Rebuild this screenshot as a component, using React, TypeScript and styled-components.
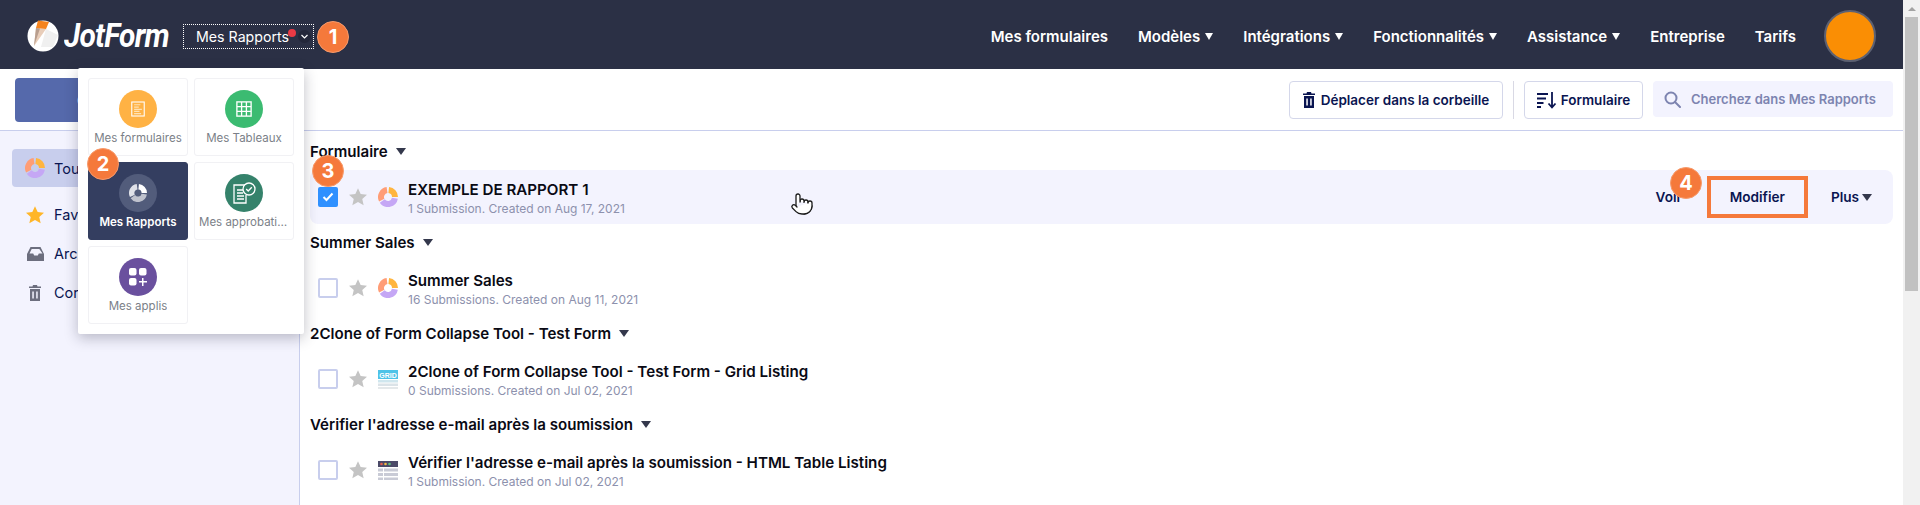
import React from "react";
import styled, { createGlobalStyle } from "styled-components";
import { Pointer } from "lucide-react";

const GlobalStyle = createGlobalStyle`
  html, body {
    margin: 0;
    padding: 0;
    background: #fff;
    overflow: hidden;
  }
  * {
    box-sizing: border-box;
  }
`;

const FONT = `"Inter", "Liberation Sans", sans-serif`;

const Shell = styled.div`
  display: flex;
  width: 1920px;
  height: 505px;
  overflow: hidden;
  position: relative;
  font-family: ${FONT};
  color: #0a1551;
`;
const Page = styled.div`
  flex: 1;
  min-width: 0;
  display: flex;
  flex-direction: column;
`;

const Header = styled.header`
  height: 69px;
  flex: none;
  background: #2b3045;
  display: flex;
  align-items: center;
  padding: 3px 27px 0;
`;
const Logo = styled.div`
  display: flex;
  align-items: center;
  gap: 5px;
  width: 156px;
`;
const LogoText = styled.span`
  font-family: "Roboto", sans-serif;
  font-size: 32.5px;
  font-weight: 700;
  font-style: italic;
  color: #fff;
  letter-spacing: -0.8px;
  transform: scaleX(0.92);
  transform-origin: left center;
`;
const Selector = styled.div`
  width: 131px;
  height: 25px;
  border: 1px dotted #fff;
  display: flex;
  align-items: center;
  padding-left: 12px;
  color: #fff;
  font-size: 14.2px;
  position: relative;
`;
const Dot = styled.span`
  position: absolute;
  left: 104px;
  top: 4px;
  width: 8px;
  height: 8px;
  border-radius: 50%;
  background: #ea3a45;
`;
const Chevron = styled.span`
  position: absolute;
  right: 2px;
  top: 5px;
  width: 13px;
  height: 13px;
  border-radius: 50%;
  background: #23273a;
  display: flex;
  align-items: center;
  justify-content: center;
`;
const Nav = styled.nav`
  margin-left: auto;
  display: flex;
  align-items: center;
  gap: 30px;
`;
const NavItem = styled.span`
  color: #fff;
  font-size: 15px;
  font-weight: 600;
  display: flex;
  align-items: center;
  gap: 5px;
  white-space: nowrap;
`;
const NavCaret = styled.span`
  width: 0;
  height: 0;
  border-left: 4px solid transparent;
  border-right: 4px solid transparent;
  border-top: 7px solid #fff;
`;
const Avatar = styled.div`
  width: 52px;
  height: 52px;
  border-radius: 50%;
  background: #fa8e04;
  border: 2px solid #5d6172;
  margin-left: -2px;
`;

const Toolbar = styled.div`
  height: 62px;
  flex: none;
  background: #fff;
  border-bottom: 1px solid #c8ceed;
  display: flex;
  align-items: flex-start;
  padding: 9px 10px 0 15px;
`;
const CreateButton = styled.div`
  width: 270px;
  height: 44px;
  border-radius: 4px;
  background: #5569ab;
  color: #fff;
  font-size: 14px;
  font-weight: 600;
  display: flex;
  align-items: center;
  padding-left: 62px;
`;
const ToolButton = styled.div`
  height: 38px;
  margin-top: 3px;
  border: 1px solid #d4d7ea;
  border-radius: 4px;
  background: #fff;
  display: flex;
  align-items: center;
  justify-content: center;
  gap: 6px;
  font-size: 13.5px;
  font-weight: 600;
  color: #0a1551;
  white-space: nowrap;
`;
const TrashButton = styled(ToolButton)`
  width: 214px;
  margin-left: auto;
`;
const SortButton = styled(ToolButton)`
  width: 119px;
  gap: 4px;
`;
const Divider = styled.div`
  width: 1px;
  height: 38px;
  margin: 3px 10px 0;
  background: #d9d9e4;
`;
const Search = styled.div`
  width: 240px;
  height: 36px;
  margin: 3px 0 0 10px;
  border-radius: 4px;
  background: #f3f3fe;
  display: flex;
  align-items: center;
  gap: 10px;
  padding-left: 11px;
  font-size: 13px;
  font-weight: 600;
  color: #7d84b0;
  white-space: nowrap;
`;

const Body = styled.div`
  flex: 1;
  min-height: 0;
  display: flex;
`;
const Sidebar = styled.aside`
  width: 300px;
  flex: none;
  background: #f3f3fe;
  border-right: 1px solid #c8ceed;
  padding: 18px 12px 0;
  display: flex;
  flex-direction: column;
`;
const SideItem = styled.div<{ $active?: boolean }>`
  height: 39px;
  border-radius: 4px;
  background: ${(p) => (p.$active ? "#c8ceed" : "transparent")};
  display: flex;
  align-items: center;
  gap: 9px;
  padding-left: 13px;
  font-size: 14.5px;
  color: #0a1551;
`;
const SideActive = styled(SideItem)`
  height: 38px;
  margin-bottom: 8px;
`;
const SideIcon = styled.span`
  width: 20px;
  flex: none;
  display: flex;
  justify-content: center;
`;

const Main = styled.main`
  flex: 1;
  min-width: 0;
  background: #fff;
  padding: 2px 10px 0;
`;
const GroupHeader = styled.div`
  height: 37px;
  display: flex;
  align-items: center;
  gap: 8px;
  font-size: 15.1px;
  font-weight: 600;
  color: #0a0a14;
  padding-bottom: 1px;
`;
const Caret = styled.span`
  width: 0;
  height: 0;
  border-left: 5px solid transparent;
  border-right: 5px solid transparent;
  border-top: 7px solid #34384c;
`;
const Row = styled.div<{ $selected?: boolean }>`
  height: 54px;
  border-radius: 8px;
  background: ${(p) => (p.$selected ? "#f3f3fe" : "transparent")};
  display: flex;
  align-items: center;
  padding: 0 21px 0 8px;
`;
const Check = styled.span<{ $checked?: boolean }>`
  width: 20px;
  height: 20px;
  border-radius: 2px;
  border: 2px solid ${(p) => (p.$checked ? "#2f90ff" : "#c8ceed")};
  background: ${(p) => (p.$checked ? "#2f90ff" : "#fff")};
  display: flex;
  align-items: center;
  justify-content: center;
  flex: none;
`;
const StarSlot = styled.span`
  margin: 0 10px 0 10px;
  display: flex;
`;
const RowText = styled.div`
  margin-left: 10px;
  padding-top: 2px;
  display: flex;
  flex-direction: column;
  gap: 2px;
`;
const RowTitle = styled.div`
  font-size: 15.15px;
  line-height: 18px;
  font-weight: 600;
  color: #0a0a14;
  white-space: nowrap;
`;
const RowSub = styled.div`
  font-size: 12px;
  line-height: 15px;
  color: #8d91ad;
  white-space: nowrap;
`;
const RowActions = styled.div`
  margin-left: auto;
  display: flex;
  align-items: center;
  font-size: 13.6px;
  font-weight: 600;
  color: #0a1551;
`;
const ActionLabel = styled.span`
  display: flex;
  align-items: center;
  gap: 3px;
`;
const EditBox = styled.span`
  width: 101px;
  height: 42px;
  margin: 0 23px 0 25px;
  border: 4px solid #f5793b;
  display: flex;
  align-items: center;
  justify-content: center;
`;

const Scrollbar = styled.div`
  width: 17px;
  flex: none;
  background: #f1f1f1;
  display: flex;
  flex-direction: column;
  align-items: center;
`;
const ScrollArrow = styled.span`
  height: 17px;
  flex: none;
  display: flex;
  align-items: center;
  &::before {
    content: "";
    width: 0;
    height: 0;
    border-left: 4px solid transparent;
    border-right: 4px solid transparent;
    border-bottom: 4px solid #a3a3a3;
  }
`;
const ScrollThumb = styled.span`
  width: 13px;
  height: 274px;
  background: #c1c1c1;
`;

// overlay menu opened from the selector
const Menu = styled.div`
  position: absolute;
  left: 78px;
  top: 68px;
  width: 226px;
  height: 266px;
  background: #fff;
  border-radius: 2px;
  box-shadow: 0 4px 14px rgba(30, 30, 50, 0.28);
  padding: 10px;
  display: grid;
  grid-template-columns: 100px 100px;
  grid-auto-rows: 78px;
  gap: 6px;
`;
const Tile = styled.div<{ $active?: boolean }>`
  border-radius: 3px;
  border: 1px solid ${(p) => (p.$active ? "#343e60" : "#f1f1f4")};
  background: ${(p) => (p.$active ? "#343e60" : "#fff")};
  color: ${(p) => (p.$active ? "#fff" : "#7b7f88")};
  font-size: 11.5px;
  font-weight: ${(p) => (p.$active ? 600 : 400)};
  display: flex;
  flex-direction: column;
  align-items: center;
  padding-top: 11px;
  gap: 3px;
  overflow: hidden;
`;
const TileCircle = styled.span<{ $bg: string }>`
  width: 38px;
  height: 38px;
  flex: none;
  border-radius: 50%;
  background: ${(p) => p.$bg};
  display: flex;
  align-items: center;
  justify-content: center;
`;
const TileLabel = styled.span`
  max-width: 90px;
  white-space: nowrap;
  overflow: hidden;
  text-overflow: ellipsis;
`;

const Badge = styled.span<{ $x: number; $y: number }>`
  position: absolute;
  left: ${(p) => p.$x - 16}px;
  top: ${(p) => p.$y - 16}px;
  width: 32px;
  height: 32px;
  border-radius: 50%;
  background: #f5793b;
  border: 1px solid #f79a6b;
  color: #fff;
  font-size: 20px;
  font-weight: 700;
  display: flex;
  align-items: center;
  justify-content: center;
`;
const Cursor = styled.span`
  position: absolute;
  left: 790px;
  top: 192px;
  display: flex;
`;

const LogoMark = () => (
  <svg width="32" height="32" viewBox="0 0 32 32">
    <circle cx="16" cy="16" r="15.500" fill="#fff" />
    <path d="M19 9 L31 15 L26 27 L14 27 Z" fill="#f0f0f0" />
    <path d="M9 8 L19 9 L7 26 Z" fill="#e8cdb9" />
    <path d="M9 8 L13 8.500 L7 26 Z" fill="#b89e8e" />
    <path d="M11 0.500 L22 2 L19 9 L9 8 Z" fill="#f5841f" />
  </svg>
);

const polar = (cx: number, cy: number, r: number, deg: number) => {
  const a = ((deg - 90) * Math.PI) / 180;
  return `${cx + r * Math.cos(a)} ${cy + r * Math.sin(a)}`;
};
const arc = (from: number, to: number) =>
  `M${polar(10, 10, 7, from)} A7 7 0 ${to - from > 180 ? 1 : 0} 1 ${polar(10, 10, 7, to)}`;

const ReportIcon = () => (
  <svg width="20" height="20" viewBox="0 0 20 20" fill="none" strokeWidth="6">
    <path d={arc(243, 352)} stroke="#ff9d76" />
    <path d={arc(6, 90)} stroke="#ffb53f" />
    <path d={arc(100, 235)} stroke="#c5a7f5" />
  </svg>
);

const GridIcon = () => (
  <svg width="20" height="20" viewBox="0 0 20 20">
    <rect x="0" y="1" width="20" height="9" fill="#4fc3e8" />
    <rect x="0" y="11" width="20" height="2.5" fill="#cfe6ee" />
    <rect x="0" y="14.5" width="20" height="2.5" fill="#dbe3e8" />
    <rect x="0" y="18" width="20" height="2" fill="#e4e8ea" />
    <text x="10" y="8.5" textAnchor="middle" fontSize="7" fontWeight="700" fill="#fff" fontFamily="Liberation Sans, sans-serif">
      GRID
    </text>
  </svg>
);

const TableIcon = () => (
  <svg width="20" height="20" viewBox="0 0 20 20">
    <rect x="0" y="1" width="20" height="6" fill="#4b4a68" />
    <circle cx="3.5" cy="4" r="1.3" fill="#e8604c" />
    <circle cx="7.5" cy="4" r="1.3" fill="#f4b942" />
    <circle cx="11.5" cy="4" r="1.3" fill="#5fc27e" />
    <rect x="0" y="8.5" width="5" height="3" fill="#c9cbd6" />
    <rect x="6" y="8.5" width="14" height="3" fill="#c9cbd6" />
    <rect x="0" y="13" width="5" height="3" fill="#c9cbd6" />
    <rect x="6" y="13" width="14" height="3" fill="#c9cbd6" />
    <rect x="0" y="17.5" width="5" height="2.5" fill="#c9cbd6" />
    <rect x="6" y="17.5" width="14" height="2.5" fill="#c9cbd6" />
  </svg>
);

const Star = ({ size = 20, color = "#c4c4c4" }: { size?: number; color?: string }) => (
  <svg width={size} height={size} viewBox="0 0 24 24">
    <path d="M12 1.500l3.200 7 7.600.8-5.700 5.100 1.700 7.600L12 18.100l-6.800 3.900 1.700-7.600L1.200 9.300l7.600-.8z" fill={color} />
  </svg>
);

const TrashIcon = ({ color }: { color: string }) => (
  <svg width="12" height="16" viewBox="0 0 12 16" fill={color}>
    <path d="M4 0h4l.5 1.500H12V3H0V1.500h3.500z" />
    <path fillRule="evenodd" d="M1 4h10v12H1zM3.300 6.500v7h1.500v-7zM7.200 6.500v7h1.500v-7z" />
  </svg>
);

const InboxIcon = () => (
  <svg width="17" height="14" viewBox="0 0 17 14" fill="#6c6e7e">
    <path fillRule="evenodd" d="M3.500 0h10L17 7v7H0V7zM4.700 2L2.500 6.500h3.700l1 2h3.600l1-2h3.700L12.300 2z" />
  </svg>
);

const SortIcon = () => (
  <svg width="20" height="18" viewBox="0 0 20 18" fill="none" stroke="#0a1551" strokeWidth="1.800">
    <path d="M0 3h11M0 7.500h9M0 12h6.500M0 16h4" />
    <path d="M15 1v15M11.500 12.500L15 16.500l3.500-4" />
  </svg>
);

const SearchIcon = () => (
  <svg width="17" height="17" viewBox="0 0 17 17" fill="none" stroke="#7d84b0" strokeWidth="2">
    <circle cx="7" cy="7" r="5.500" />
    <path d="M11 11l5 5" strokeLinecap="round" />
  </svg>
);

const CheckMark = () => (
  <svg width="12" height="10" viewBox="0 0 12 10" fill="none" stroke="#fff" strokeWidth="2">
    <path d="M1.500 5l3 3 6-6.500" />
  </svg>
);

const FormsGlyph = () => (
  <svg width="14" height="16" viewBox="0 0 18 20" fill="none" stroke="#fff" strokeWidth="1.400">
    <rect x="1" y="1" width="16" height="18" />
    <path d="M4 4.500h8M4 7.500h6M4 10.500h10M4 13h7M4 16h9" stroke="#ffe2b5" strokeWidth="1.500" />
  </svg>
);

const SheetGlyph = () => (
  <svg width="16" height="16" viewBox="0 0 18 18" fill="none" stroke="#fff" strokeWidth="1.500">
    <rect x="1" y="1" width="16" height="16" />
    <path d="M6.300 1v16M11.700 1v16M1 6.300h16M1 11.700h16" />
  </svg>
);

const PieGlyph = () => (
  <svg width="18" height="18" viewBox="0 0 20 20" fill="none" strokeWidth="6">
    <path d={arc(243, 352)} stroke="#dfe1e8" />
    <path d={arc(6, 90)} stroke="#ffffff" />
    <path d={arc(100, 235)} stroke="#bfc2cd" />
  </svg>
);

const ApprovalGlyph = () => (
  <svg width="24" height="22" viewBox="0 0 24 22" fill="none" stroke="#fff" strokeWidth="1.300">
    <path d="M13 3H2v18h12v-8" />
    <path d="M5 8h6M5 11h6M5 14h7M5 17h7" />
    <circle cx="17" cy="7" r="6" fill="#35826b" />
    <path d="M14.200 7l2 2 3.600-3.800" />
  </svg>
);

const AppsGlyph = () => (
  <svg width="18" height="18" viewBox="0 0 18 18" fill="#fff">
    <rect x="0" y="0" width="7.500" height="7.500" rx="2" />
    <rect x="10" y="0" width="7.500" height="7.500" rx="2" />
    <rect x="0" y="10" width="7.500" height="7.500" rx="2" />
    <path d="M13 10h1.500v3H18v1.500h-3.500V18H13v-3.500H10V13h3z" />
  </svg>
);

const navItems = [
  { label: "Mes formulaires" },
  { label: "Modèles", caret: true },
  { label: "Intégrations", caret: true },
  { label: "Fonctionnalités", caret: true },
  { label: "Assistance", caret: true },
  { label: "Entreprise" },
  { label: "Tarifs" },
];

const groups = [
  {
    name: "Formulaire",
    title: "EXEMPLE DE RAPPORT 1",
    sub: "1 Submission. Created on Aug 17, 2021",
    icon: <ReportIcon />,
    selected: true,
  },
  {
    name: "Summer Sales",
    title: "Summer Sales",
    sub: "16 Submissions. Created on Aug 11, 2021",
    icon: <ReportIcon />,
  },
  {
    name: "2Clone of Form Collapse Tool - Test Form",
    title: "2Clone of Form Collapse Tool - Test Form - Grid Listing",
    sub: "0 Submissions. Created on Jul 02, 2021",
    icon: <GridIcon />,
  },
  {
    name: "Vérifier l'adresse e-mail après la soumission",
    title: "Vérifier l'adresse e-mail après la soumission - HTML Table Listing",
    sub: "1 Submission. Created on Jul 02, 2021",
    icon: <TableIcon />,
  },
];

const App: React.FC = () => {
  return (
    <Shell>
      <GlobalStyle />
      <Page>
        <Header>
          <Logo>
            <LogoMark />
            <LogoText>JotForm</LogoText>
          </Logo>
          <Selector>
            Mes Rapports
            <Dot />
            <Chevron>
              <svg width="7" height="5" viewBox="0 0 7 5" fill="none" stroke="#fff" strokeWidth="1.200">
                <path d="M.5 1l3 3 3-3" />
              </svg>
            </Chevron>
          </Selector>
          <Nav>
            {navItems.map((item) => (
              <NavItem key={item.label}>
                {item.label}
                {item.caret && <NavCaret />}
              </NavItem>
            ))}
            <Avatar />
          </Nav>
        </Header>
        <Toolbar>
          <CreateButton>Créer un rapport</CreateButton>
          <TrashButton>
            <TrashIcon color="#0a1551" />
            Déplacer dans la corbeille
          </TrashButton>
          <Divider />
          <SortButton>
            <SortIcon />
            Formulaire
          </SortButton>
          <Search>
            <SearchIcon />
            Cherchez dans Mes Rapports
          </Search>
        </Toolbar>
        <Body>
          <Sidebar>
            <SideActive $active>
              <SideIcon>
                <ReportIcon />
              </SideIcon>
              Tous les rapports
            </SideActive>
            <SideItem>
              <SideIcon>
                <Star size={20} color="#ffb629" />
              </SideIcon>
              Favoris
            </SideItem>
            <SideItem>
              <SideIcon>
                <InboxIcon />
              </SideIcon>
              Archive
            </SideItem>
            <SideItem>
              <SideIcon>
                <TrashIcon color="#6c6e7e" />
              </SideIcon>
              Corbeille
            </SideItem>
          </Sidebar>
          <Main>
            {groups.map((g) => (
              <div key={g.name}>
                <GroupHeader>
                  {g.name}
                  <Caret />
                </GroupHeader>
                <Row $selected={g.selected}>
                  <Check $checked={g.selected}>{g.selected && <CheckMark />}</Check>
                  <StarSlot>
                    <Star />
                  </StarSlot>
                  {g.icon}
                  <RowText>
                    <RowTitle>{g.title}</RowTitle>
                    <RowSub>{g.sub}</RowSub>
                  </RowText>
                  {g.selected && (
                    <RowActions>
                      <ActionLabel>Voir</ActionLabel>
                      <EditBox>Modifier</EditBox>
                      <ActionLabel>
                        Plus
                        <Caret />
                      </ActionLabel>
                    </RowActions>
                  )}
                </Row>
              </div>
            ))}
          </Main>
        </Body>
      </Page>
      <Scrollbar>
        <ScrollArrow />
        <ScrollThumb />
      </Scrollbar>

      <Menu>
        <Tile>
          <TileCircle $bg="#ffb244">
            <FormsGlyph />
          </TileCircle>
          <TileLabel>Mes formulaires</TileLabel>
        </Tile>
        <Tile>
          <TileCircle $bg="#3bbb71">
            <SheetGlyph />
          </TileCircle>
          <TileLabel>Mes Tableaux</TileLabel>
        </Tile>
        <Tile $active>
          <TileCircle $bg="#525c7b">
            <PieGlyph />
          </TileCircle>
          <TileLabel>Mes Rapports</TileLabel>
        </Tile>
        <Tile>
          <TileCircle $bg="#35826b">
            <ApprovalGlyph />
          </TileCircle>
          <TileLabel>Mes approbations</TileLabel>
        </Tile>
        <Tile>
          <TileCircle $bg="#6a509e">
            <AppsGlyph />
          </TileCircle>
          <TileLabel>Mes applis</TileLabel>
        </Tile>
      </Menu>

      <Badge $x={333} $y={37}>1</Badge>
      <Badge $x={103} $y={164}>2</Badge>
      <Badge $x={328} $y={171}>3</Badge>
      <Badge $x={1686} $y={183}>4</Badge>
      <Cursor>
        <Pointer size={24} color="#1a1a1a" fill="#fff" strokeWidth={1.3} />
      </Cursor>
    </Shell>
  );
};

export default App;
